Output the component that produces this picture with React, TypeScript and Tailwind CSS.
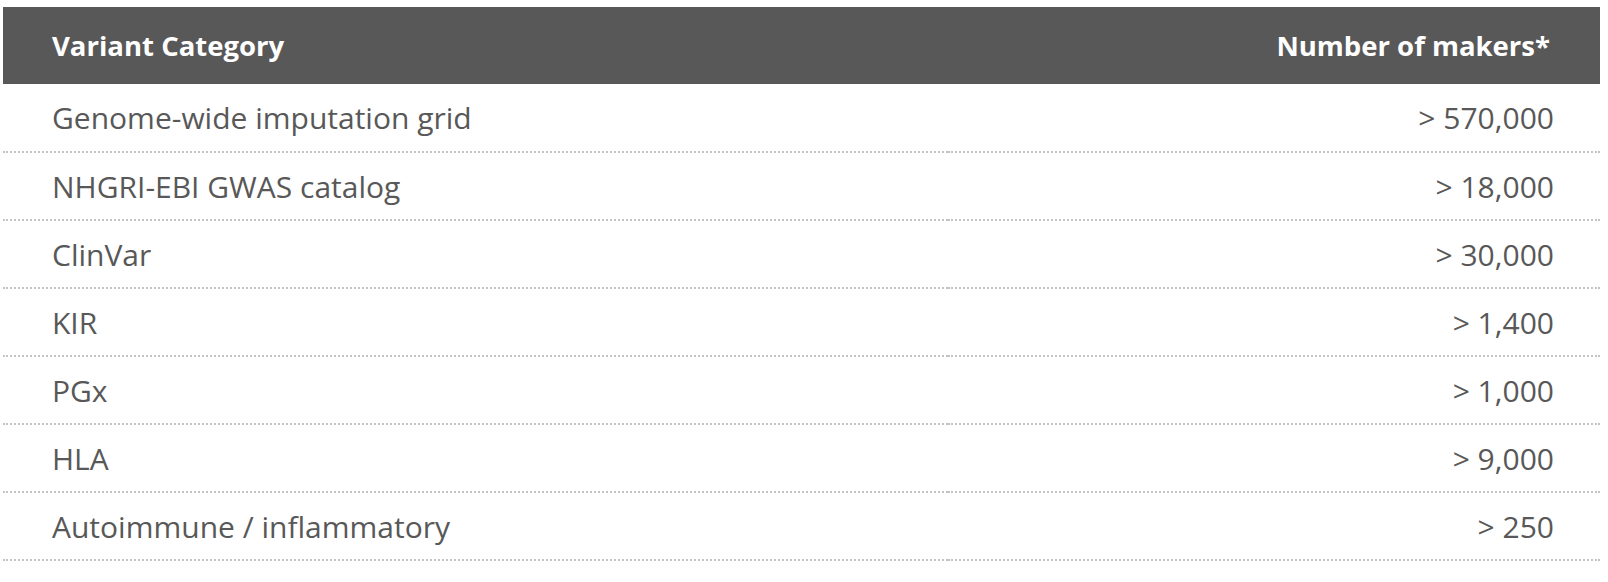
const rows = [
  { name: "Genome-wide imputation grid", count: "> 570,000" },
  { name: "NHGRI-EBI GWAS catalog", count: "> 18,000" },
  { name: "ClinVar", count: "> 30,000" },
  { name: "KIR", count: "> 1,400" },
  { name: "PGx", count: "> 1,000" },
  { name: "HLA", count: "> 9,000" },
  { name: "Autoimmune / inflammatory", count: "> 250" },
];

export default function App() {
  return (
    <div className="bg-white w-[1608px] h-[582px] pl-[3px] pr-[8px] pt-[7px] font-['Open_Sans',sans-serif]">
      <table className="w-full border-collapse">
        <thead>
          <tr className="bg-[#595859] h-[77px]">
            <th className="text-left font-bold text-white text-[27.5px] pl-[49px]">Variant Category</th>
            <th className="text-right font-bold text-white text-[27.5px] pr-[50px]">Number of makers*</th>
          </tr>
        </thead>
        <tbody>
          {rows.map((r) => (
            <tr key={r.name} className="h-[68px] border-b-2 border-dotted border-[#c4c4c4]">
              <td className="text-left text-[30px] text-[#585858] pl-[49px]">{r.name}</td>
              <td className="text-right text-[30px] text-[#585858] pr-[46px]">{r.count}</td>
            </tr>
          ))}
        </tbody>
      </table>
    </div>
  );
}
